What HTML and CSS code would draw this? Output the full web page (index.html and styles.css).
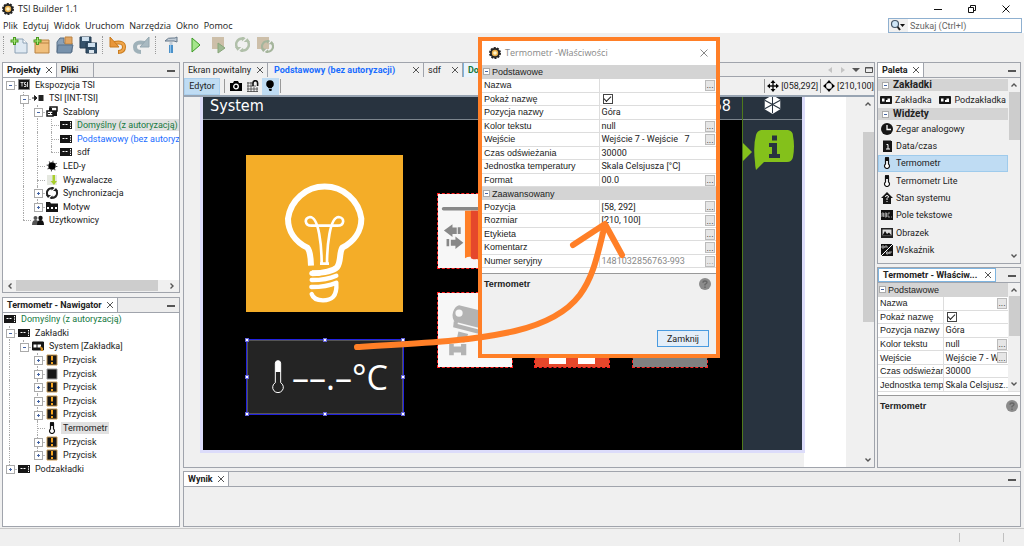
FILE: index.html
```html
<!DOCTYPE html>
<html lang="pl">
<head>
<meta charset="utf-8">
<title>TSI Builder 1.1</title>
<link rel="stylesheet" href="styles.css">
</head>
<body>
<svg class="defs" aria-hidden="true">
  <symbol id="gear" viewBox="0 0 12 12"><circle cx="6" cy="6" r="5" fill="#222" stroke="#222" stroke-width="2" stroke-dasharray="2 1.1"/><circle cx="6" cy="6" r="3.2" fill="#e9b04a"/><circle cx="6" cy="6" r="1.8" fill="#fff3c8"/></symbol>
  <symbol id="x" viewBox="0 0 8 8"><path d="M1 1l6 6m0-6l-6 6" stroke="currentColor" fill="none"/></symbol>
  <symbol id="up" viewBox="0 0 8 8"><path d="M1.5 5.5L4 3l2.500 2.500" stroke="#555" stroke-width="1.400" fill="none"/></symbol>
  <symbol id="down" viewBox="0 0 8 8"><path d="M1.500 2.500L4 5l2.500-2.500" stroke="#555" stroke-width="1.400" fill="none"/></symbol>
  <symbol id="left" viewBox="0 0 8 8"><path d="M5.500 1.500L3 4l2.500 2.500" stroke="#555" stroke-width="1.400" fill="none"/></symbol>
  <symbol id="right" viewBox="0 0 8 8"><path d="M2.500 1.500L5 4 2.500 6.500" stroke="#555" stroke-width="1.400" fill="none"/></symbol>
  <symbol id="panel" viewBox="0 0 12 12"><path d="M0 2h12v8H0z" fill="#161616"/><path d="M2.500 5.500h2M5.500 5.500h2" stroke="#fff"/><path d="M10.500 3v6" stroke="#fff" stroke-dasharray="1.400 1"/></symbol>
  <symbol id="tsi" viewBox="0 0 12 12"><path d="M.5.5h11v10H.5z" fill="#161616" stroke="#888"/><path d="M2.500 3.500h3M4 3.500v4M8 3.500H6.500v2H8v2H6M9.500 3v5" stroke="#fff" fill="none" stroke-width=".8"/></symbol>
  <symbol id="input" viewBox="0 0 12 12"><path d="M0 6h4M2.500 3.500L5 6 2.500 8.500z" stroke="#222" fill="#222"/><path d="M6.500 3h5v6h-5z" fill="#222"/></symbol>
  <symbol id="stack" viewBox="0 0 12 12"><path d="M4 1h7v4H4zM1 5h6v5H1z" fill="#fff" stroke="#161616" stroke-width="1.500"/><path d="M7 5h4v5H7zM3 2h3v3H3z" fill="#161616"/><path d="M2 7.500h8" stroke="#161616" stroke-dasharray="2 1"/></symbol>
  <symbol id="led" viewBox="0 0 12 12"><circle cx="6" cy="6" r="4.600" fill="none" stroke="#333" stroke-width="1.600" stroke-dasharray=".9 2.710"/><circle cx="6" cy="6" r="3.700" fill="#000"/></symbol>
  <symbol id="trigger" viewBox="0 0 12 12"><path d="M1 1h10v10H1z" fill="#e5e8e0"/><path d="M6.500 1h2.500v6h2L8 11 4.500 7h2z" fill="#a9cf2c"/></symbol>
  <symbol id="sync" viewBox="0 0 12 12"><path d="M6 1.200A4.800 4.800 0 0 0 2 9M6 10.800A4.800 4.800 0 0 0 10 3" fill="none" stroke="currentColor" stroke-width="2"/><path d="M5.500-1v4.500L8.500 1zM6.500 13V8.500L3.500 11zM0 8h5l-3 3zM12 4H7l3-3z" fill="currentColor"/></symbol>
  <symbol id="theme" viewBox="0 0 12 12"><path d="M0 1h4l1 1.500h7V11H0z" fill="#161616"/><path d="M1 6h2v2H1zM5 6h2v2H5zM9 6h2v2H9z" fill="#fff"/></symbol>
  <symbol id="users" viewBox="0 0 12 12"><circle cx="3.500" cy="4" r="2" fill="#555"/><path d="M0 11q0-5 3.500-5T7 11z" fill="#555"/><circle cx="8.500" cy="4" r="2.200" fill="#111"/><path d="M5 11q0-5 3.500-5t3.500 5z" fill="#111"/></symbol>
  <symbol id="page" viewBox="0 0 12 12"><path d="M.5 2.500h11v7H.5z" fill="#161616" stroke="#161616"/><path d="M2 4.500h2.500v3H2zM6 6h1.500V4.500H10V8H6z" fill="#fff"/></symbol>
  <symbol id="pageo" viewBox="0 0 12 12"><path d="M.5 2h11v8H.5z" fill="#161616" stroke="#161616"/><path d="M1.500 4.500h3v3h-3zM5.500 4.500H9v3H5.500z" fill="#fff"/><path d="M8 6l3 2v3H9z" fill="#d08b20"/></symbol>
  <symbol id="bang" viewBox="0 0 12 12"><path d="M1 1h10v10H1z" fill="#161616" stroke="#c79a55"/><path d="M6 2v4.500M6 8v2" stroke="#f7a41d" stroke-width="2"/></symbol>
  <symbol id="square" viewBox="0 0 12 12"><path d="M1 1h10v10H1z" fill="#161616" stroke="#999"/></symbol>
  <symbol id="thermo" viewBox="0 0 12 12"><path d="M4.500 7V1.500a1.500 1.500 0 0 1 3 0V7a2.500 2.500 0 1 1-3 0z" fill="#fff" stroke="#111" stroke-width="1.200"/><path d="M4.500 4V1.500a1.500 1.500 0 0 1 3 0V4z" fill="#111"/></symbol>
  <symbol id="clock" viewBox="0 0 12 12"><circle cx="6" cy="6" r="6" fill="#161616"/><path d="M6 2v4.500h4" stroke="#fff" fill="none" stroke-width="1.300"/></symbol>
  <symbol id="date" viewBox="0 0 12 12"><path d="M2 1h9v11H2z" fill="#161616"/><path d="M3 1V0m2 1V0m2 1V0m2 1V0" stroke="#161616"/><path d="M5.500 4.500h1.500v4.500M5 9h4" stroke="#fff" fill="none"/></symbol>
  <symbol id="house" viewBox="0 0 12 12"><path d="M6 0l6 6h-2v6H2V6H0z" fill="#161616"/><path d="M4.500 5Q4.500 3.500 6 3.500T7.500 5L6 6.500V8m0 1v1" stroke="#fff" fill="none"/></symbol>
  <symbol id="abc" viewBox="0 0 12 12"><path d="M0 1h12v10H0z" fill="#111"/><path d="M1 8V4h1.500v4M1 6h1.500M4 4v4h1.500V4zM4 6h1.500M9 4H7v4h2M10 8h1" stroke="#bbb" fill="none" stroke-width=".8"/></symbol>
  <symbol id="image" viewBox="0 0 12 12"><path d="M0 1h12v10H0z" fill="#222"/><path d="M1.500 2.500h9v6h-9z" fill="#ddd"/><path d="M1.500 8.500L4 4l2 3 2-1.500 2.500 3z" fill="#111"/></symbol>
  <symbol id="onoff" viewBox="0 0 12 12"><path d="M0 0h12v12H0z" fill="#111"/><path d="M0 12L12 0" stroke="#fff"/><path d="M1 2h2v2H1zM4 4V2h2v2M5.500 8h1.500v2H5.500zM8 10V8h3M8 9h2" stroke="#ccc" fill="none" stroke-width=".8"/></symbol>
  <symbol id="help" viewBox="0 0 12 12"><circle cx="6" cy="6" r="6" fill="#8b8b8b"/><path d="M4 4.800Q4 3 6 3t2 1.600Q8 5.500 6 6.500v1M6 8.500V10" stroke="#666" fill="none" stroke-width="1.300"/></symbol>
</svg>

<header class="top">
  <div class="titlebar">
    <svg class="i12"><use href="#gear"/></svg><span>TSI Builder 1.1</span>
    <div class="winbtns">
      <button aria-label="Minimalizuj"><svg viewBox="0 0 8 8"><path d="M0 4.500h8" stroke="#111"/></svg></button>
      <button aria-label="Przywróć"><svg viewBox="0 0 8 8"><path d="M.5 2.500h5v5h-5zM2.500 2V.5h5v5H6" stroke="#111" fill="none"/></svg></button>
      <button aria-label="Zakończ"><svg viewBox="0 0 8 8"><path d="M.5.5l7 7m0-7l-7 7" stroke="#111"/></svg></button>
    </div>
  </div>
  <div class="menubar">
    <nav class="menu"><button>Plik</button><button>Edytuj</button><button>Widok</button><button>Uruchom</button><button>Narzędzia</button><button>Okno</button><button>Pomoc</button></nav>
    <label class="search"><span class="lens"><svg viewBox="0 0 16 12"><path d="M7 7l3 4" stroke="#222" stroke-width="2"/><circle cx="5" cy="5" r="3.500" fill="#cfe6f7" stroke="#456" stroke-width="1.200"/><path d="M10 5h5l-2.500 3z" fill="#111"/></svg></span><input type="text" placeholder="Szukaj (Ctrl+I)" aria-label="Szukaj"></label>
  </div>
</header>

<div class="toolbar">
  <i class="grip"></i>
  <button aria-label="Nowy plik"><svg viewBox="0 0 18 18"><path d="M5 3h8l4 4v10H5z" fill="#dfe9f2" stroke="#8ba0b4"/><path d="M13 3v4h4" fill="#fff" stroke="#8ba0b4"/><path d="M4.500 1v8M.5 5h8" stroke="#4a9b1f" stroke-width="3"/><path d="M4.500 2v6M1.500 5h6" stroke="#a9e77c"/></svg></button>
  <button aria-label="Nowy projekt"><svg viewBox="0 0 18 18"><path d="M2 4h14v13H2z" fill="#f0bf7c" stroke="#b98242"/><path d="M2 7h14" stroke="#b98242"/><path d="M4.500 1v8M.5 5h8" stroke="#4a9b1f" stroke-width="3"/><path d="M4.500 2v6M1.500 5h6" stroke="#a9e77c"/></svg></button>
  <button aria-label="Otwórz projekt"><svg viewBox="0 0 18 18"><path d="M1 16V6l3-4h4v5h8v9z" fill="#8ba1b8" stroke="#587089"/><path d="M9 1h7v7H9z" fill="#e2a765" stroke="#b98242"/><path d="M2 9h15l-2 8H1z" fill="#7892ac" stroke="#587089"/></svg></button>
  <button aria-label="Zapisz wszystko"><svg viewBox="0 0 18 18"><path d="M1 1h11v11H1zM7 7h11v10H7z" fill="#35526b" stroke="#243b50"/><path d="M3 1h7v4H3zM9 7h7v4H9z" fill="#cfe0ee"/><path d="M10 14h5v3h-5z" fill="#dde6ee"/></svg></button>
  <i class="grip"></i>
  <button aria-label="Cofnij"><svg viewBox="0 0 18 18"><path d="M5 7q10-2 10 4 0 5-6 5" fill="none" stroke="#c87a1c" stroke-width="4"/><path d="M5 7q10-2 10 4 0 4-5 5" fill="none" stroke="#f0a54a" stroke-width="2"/><path d="M1 1v10h9z" fill="#e8963a" stroke="#c87a1c"/></svg></button>
  <button aria-label="Ponów"><svg viewBox="0 0 18 18"><path d="M13 7Q3 5 3 11q0 5 6 5" fill="none" stroke="#9fb1b9" stroke-width="4"/><path d="M17 1v10H8z" fill="#a9bac2" stroke="#94a7b0"/></svg></button>
  <i class="grip"></i>
  <button aria-label="Zbuduj"><svg viewBox="0 0 18 18"><path d="M3 5q3-4 8-3h2l2-1v5l-3-1H3z" fill="#c3ced8" stroke="#66788a"/><path d="M7.500 6h3v4h-3z" fill="#c3ced8"/><path d="M7 9h4v8H7z" fill="#4b91c9"/><path d="M8.500 9v8" stroke="#8fc3ec"/></svg></button>
  <button class="run" aria-label="Uruchom"><svg viewBox="0 0 18 18"><path d="M4 2v14l8-7z" fill="#a5e68c" stroke="#3c9b24"/></svg></button>
  <button disabled aria-label="Uruchom moduł"><svg viewBox="0 0 18 18"><path d="M1 1h12v12H1z" fill="#cdbfa9"/><path d="M7 7v10l7-5z" fill="#9fb992" stroke="#88a67b"/></svg></button>
  <button disabled aria-label="Odśwież"><svg viewBox="0 0 18 18" color="#b1c0aa"><use href="#sync" x="1" y="1" width="15" height="15"/></svg></button>
  <button disabled aria-label="Odśwież projekt"><svg viewBox="0 0 18 18" color="#a5b59c"><path d="M0 1h12v12H0z" fill="#cdbfa9"/><use href="#sync" x="4" y="4" width="13" height="13"/></svg></button>
</div>

<main class="work">
  <aside class="leftcol">
    <section class="pane">
      <div class="tabs"><button class="tab on b">Projekty <svg><use href="#x"/></svg></button><button class="tab b files">Pliki</button><span class="min"></span></div>
      <ul class="tree t11">
        <li><i class="c m r"></i><svg><use href="#tsi"/></svg><span>Ekspozycja TSI</span></li>
        <li><i></i><i class="c m d"></i><svg><use href="#input"/></svg><span>TSI [INT-TSI]</span></li>
        <li><i></i><i class="v"></i><i class="c m d"></i><svg><use href="#stack"/></svg><span>Szablony</span></li>
        <li><i></i><i class="v"></i><i class="v"></i><i class="v h"></i><svg><use href="#panel"/></svg><span class="green sel">Domyślny (z autoryzacją)</span></li>
        <li><i></i><i class="v"></i><i class="v"></i><i class="v h"></i><svg><use href="#panel"/></svg><span class="blue">Podstawowy (bez autoryzacji)</span></li>
        <li><i></i><i class="v"></i><i class="v"></i><i class="e h"></i><svg><use href="#panel"/></svg><span>sdf</span></li>
        <li><i></i><i class="v"></i><i class="v h"></i><svg><use href="#led"/></svg><span>LED-y</span></li>
        <li><i></i><i class="v"></i><i class="v h"></i><svg><use href="#trigger"/></svg><span>Wyzwalacze</span></li>
        <li><i></i><i class="v"></i><i class="c p v"></i><svg><use href="#sync"/></svg><span>Synchronizacja</span></li>
        <li><i></i><i class="v"></i><i class="c p e"></i><svg><use href="#theme"/></svg><span>Motyw</span></li>
        <li><i></i><i class="e h"></i><svg><use href="#users"/></svg><span>Użytkownicy</span></li>
      </ul>
      <div class="hscroll"><svg><use href="#left"/></svg><b></b><svg><use href="#right"/></svg></div>
    </section>
    <section class="pane">
      <div class="tabs"><button class="tab on b">Termometr - Nawigator <svg><use href="#x"/></svg></button><span class="min"></span></div>
      <ul class="tree t12">
        <li><svg><use href="#panel"/></svg><span class="green">Domyślny (z autoryzacją)</span></li>
        <li><i class="c m v"></i><svg><use href="#panel"/></svg><span>Zakładki</span></li>
        <li><i class="v"></i><i class="c m e"></i><svg><use href="#pageo"/></svg><span>System [Zakładka]</span></li>
        <li><i class="v"></i><i></i><i class="c p v"></i><svg><use href="#bang"/></svg><span>Przycisk</span></li>
        <li><i class="v"></i><i></i><i class="c p v"></i><svg><use href="#square"/></svg><span>Przycisk</span></li>
        <li><i class="v"></i><i></i><i class="c p v"></i><svg><use href="#bang"/></svg><span>Przycisk</span></li>
        <li><i class="v"></i><i></i><i class="c p v"></i><svg><use href="#bang"/></svg><span>Przycisk</span></li>
        <li><i class="v"></i><i></i><i class="c p v"></i><svg><use href="#bang"/></svg><span>Przycisk</span></li>
        <li><i class="v"></i><i></i><i class="v h"></i><svg><use href="#thermo"/></svg><span class="sel">Termometr</span></li>
        <li><i class="v"></i><i></i><i class="c p v"></i><svg><use href="#bang"/></svg><span>Przycisk</span></li>
        <li><i class="v"></i><i></i><i class="c p e"></i><svg><use href="#bang"/></svg><span>Przycisk</span></li>
        <li><i class="c p e"></i><svg><use href="#panel"/></svg><span>Podzakładki</span></li>
      </ul>
    </section>
  </aside>

  <div class="rest">
    <div class="upper">
      <section class="editor">
        <div class="tabs doc">
          <button class="tab welcome">Ekran powitalny <svg><use href="#x"/></svg></button><button class="tab b blue basic">Podstawowy (bez autoryzacji) <svg><use href="#x"/></svg></button><button class="tab sdf">sdf <svg><use href="#x"/></svg></button><button class="tab on b green">Domyślny (z autoryzacją) <svg><use href="#x"/></svg></button>
          <span class="docnav"><svg viewBox="0 0 8 8"><path d="M6 1v6L2 4z" fill="#c4c4c4"/></svg><svg viewBox="0 0 8 8"><path d="M2 1v6l4-3z" fill="#c4c4c4"/></svg><svg viewBox="0 0 8 8"><path d="M0 2h8L4 6z" fill="#555"/></svg><svg viewBox="0 0 8 8"><path d="M.5 1.500h7v5h-7zM0 2h8" stroke="#555" fill="none"/></svg></span>
        </div>
        <div class="edbar">
          <button class="edtab">Edytor</button><i class="sep"></i>
          <button aria-label="Zrzut ekranu"><svg viewBox="0 0 12 12"><path d="M0 3h3l1-2h4l1 2h3v8H0z"/><circle cx="6" cy="6.500" r="2.300" fill="none" stroke="#fff" stroke-width="1.300"/></svg></button>
          <button aria-label="Przyciąganie"><svg viewBox="0 0 12 12"><path d="M0 3h6M0 6h9M0 9h11M1 2v10M4 2v10M7 7v5M10 7v5M0 11.500h11" stroke="#444" stroke-width=".8"/><path d="M6 6V3a2.300 2.300 0 0 1 4.600 0v3" fill="none" stroke="#111" stroke-width="1.600"/></svg></button>
          <button class="lit" aria-label="Podświetlenie"><svg viewBox="0 0 12 12"><circle cx="6" cy="4" r="3.800"/><path d="M4 7h4l-.5 4h-2z"/><path d="M4 8.500h4" stroke="#bfdcf3" stroke-width=".7"/></svg></button>
          <i class="sep"></i>
          <span class="coords"><i class="sep"></i><svg viewBox="0 0 12 12"><path d="M6 1v10M1 6h10" stroke="#111" stroke-width="1.400"/><path d="M6 0l2.500 3h-5zM6 12l2.500-3h-5zM0 6l3-2.500v5zM12 6L9 3.500v5z"/></svg>[058,292]<i class="sep"></i><svg viewBox="0 0 12 12"><circle cx="6" cy="6" r="3.500" fill="none" stroke="#111"/><path d="M6 0l2.500 3h-5zM6 12l2.500-3h-5zM0 6l3-2.500v5zM12 6L9 3.500v5z"/></svg>[210,100]</span>
        </div>
        <div class="stage">
          <div class="sheet">
            <div class="device">
              <div class="screen">
                <div class="bar"><span>System</span><span>58</span></div>
                <svg class="w bulb" viewBox="48 46 471 471" fill="none" stroke="#fff" stroke-width="18"><path d="M243 378Q242 336 232 324C194 305 174 273 174 237A111 111 0 0 1 394 237C394 273 373 305 337 324C327 340 334 366 321 383Q304 399 246 401"/><path d="M246 401h20" stroke-width="16" stroke-linecap="round"/><path d="M275 374C275 320 267 232 240 232C222 234 223 258 245 258H322C344 258 345 234 326 232C299 232 291 320 291 374M270 372h27" stroke-width="8"/><path d="M245 421Q290 421 319 408" stroke-width="13" stroke-linecap="round"/><path d="M244 442Q290 442 319 429C322 472 304 482 279 482Q251 482 245 463" stroke-width="13" stroke-linecap="round" stroke-linejoin="round"/></svg>
                <div class="w temp">
                  <svg class="th" viewBox="120 112 42 102"><path d="M133 180V122a8 8 0 0 1 16 0V180a16 16 0 1 1-16 0z" fill="none" stroke="#fff" stroke-width="3"/><path d="M133 148V122a8 8 0 0 1 16 0V148z" fill="#fff"/></svg>
                  <span>––.–°C</span>
                  <i class="k nw"></i><i class="k n"></i><i class="k ne"></i><i class="k ww"></i><i class="k ee"></i><i class="k sw"></i><i class="k s"></i><i class="k se"></i>
                </div>
                <div class="w tile t1"><svg viewBox="620 160 225 225"><path d="M637 205H845" stroke="#888" stroke-width="11" stroke-linecap="round"/><path d="M702 211h130v142q-9-6-18 0-12 8-24 0l-30 0q-12 12-28 2-15-8-30 0z" fill="#ff7f27"/><path d="M720 211h30v142q-14 10-30 2z" fill="#e5472b"/><path d="M638 271l26-19v10h13v20h-13v9zM680 261h9v21h-9zM697 308l-24-19v10h-14v18h14v10zM646 297h8v22h-8z" fill="#888"/></svg></div>
                <div class="w tile t2"><svg viewBox="620 455 225 225"><path d="M684 492l120 30v60l-130-34q-14-18-8-36 6-18 18-20z" fill="#b3b3b3"/><circle cx="684" cy="516" r="11" fill="#f7f7f7"/><path d="M668 541l160 40v20l-162-42z" fill="#b3b3b3"/><path d="M680 547l140 36" stroke="#f7f7f7" stroke-width="5"/><path d="M682 572l30 8-12 26-24-6zM654 610h14v8h22v-8h16v34h-16v-8h-22v8h-14z" fill="#b3b3b3"/></svg></div>
                <div class="w tile t3"><b></b><b></b></div>
                <div class="w tile t4"></div>
              </div>
              <div class="side">
                <div class="bar"><svg viewBox="0 0 20 22"><path d="M10 0l9 5.500v11L10 22l-9-5.500v-11z" fill="#fff"/><path d="M10 1v20M1 6l18 10M19 6L1 16" stroke="#28333f" stroke-width="1.200"/></svg></div>
                <svg class="info" viewBox="0 0 60 50"><path d="M0 13l9 9-9 9z" fill="#84c11b"/><path d="M18 0Q31-1.500 45 0 50 1 50 6 52 16 50 27 49 32 44 32H21L13 40Q12 36 12 32 10 16 13 5 14 1 18 0z" fill="#84c11b"/><path d="M29 5.500h5v5h-5zM26 13h8v11h3v4H26v-4h3v-7h-3z" fill="#28333f"/></svg>
              </div>
            </div>
          </div>
          <div class="vscroll big"><svg><use href="#up"/></svg><b></b><svg><use href="#down"/></svg></div>
        </div>
      </section>

      <aside class="rightcol">
        <section class="pane">
          <div class="tabs"><button class="tab on b">Paleta <svg><use href="#x"/></svg></button><span class="min"></span></div>
          <div class="scrollbox">
            <div class="palette">
              <h3><i class="bx"></i>Zakładki</h3>
              <div class="two"><span><svg><use href="#page"/></svg>Zakładka</span><span><svg><use href="#page"/></svg>Podzakładka</span></div>
              <h3><i class="bx"></i>Widżety</h3>
              <ul>
                <li><svg><use href="#clock"/></svg>Zegar analogowy</li><li><svg><use href="#date"/></svg>Data/czas</li><li class="cur"><svg><use href="#thermo"/></svg>Termometr</li><li><svg><use href="#thermo"/></svg>Termometr Lite</li><li><svg><use href="#house"/></svg>Stan systemu</li><li><svg><use href="#abc"/></svg>Pole tekstowe</li><li><svg><use href="#image"/></svg>Obrazek</li><li><svg><use href="#onoff"/></svg>Wskaźnik</li><li><svg><use href="#panel"/></svg>Kamera</li>
              </ul>
            </div>
            <div class="vscroll"><svg><use href="#up"/></svg><b></b><svg><use href="#down"/></svg></div>
          </div>
        </section>
        <section class="pane props">
          <div class="tabs"><button class="tab on b focus">Termometr - Właściw... <svg><use href="#x"/></svg></button><span class="min"></span></div>
          <div class="scrollbox">
            <div class="clip"><table class="grid small">
              <tr><th colspan="2"><i class="bx"></i>Podstawowe</th></tr>
              <tr><td>Nazwa</td><td><button aria-label="Nazwa">...</button></td></tr>
              <tr><td><label for="s1">Pokaż nazwę</label></td><td><input type="checkbox" id="s1" checked></td></tr>
              <tr><td>Pozycja nazwy</td><td>Góra</td></tr>
              <tr><td>Kolor tekstu</td><td>null<button aria-label="Kolor tekstu">...</button></td></tr>
              <tr><td>Wejście</td><td>Wejście 7 - W<button aria-label="Wejście">...</button></td></tr>
              <tr><td>Czas odświeżani</td><td>30000</td></tr>
              <tr><td>Jednostka temper</td><td>Skala Celsjusz...</td></tr>
            </table></div>
            <div class="vscroll p"><svg><use href="#up"/></svg><b></b><svg><use href="#down"/></svg></div>
          </div>
          <div class="desc"><b>Termometr</b><svg class="i12"><use href="#help"/></svg></div>
        </section>
      </aside>
    </div>
    <section class="pane output">
      <div class="tabs"><button class="tab on b">Wynik <svg><use href="#x"/></svg></button><span class="min"></span></div>
    </section>
  </div>
</main>
<footer class="status"><i></i><i></i></footer>

<div class="dialog" role="dialog" aria-label="Termometr - Właściwości">
  <div class="dtitle"><svg class="i12"><use href="#gear"/></svg><span>Termometr -Właściwości</span><button aria-label="Zamknij okno"><svg viewBox="0 0 8 8"><path d="M.5.5l7 7m0-7l-7 7" stroke="#888"/></svg></button></div>
  <table class="grid full">
    <tr><th colspan="2"><i class="bx"></i>Podstawowe</th></tr>
    <tr><td>Nazwa</td><td><button aria-label="Nazwa">...</button></td></tr>
    <tr><td><label for="d1">Pokaż nazwę</label></td><td><input type="checkbox" id="d1" checked></td></tr>
    <tr><td>Pozycja nazwy</td><td>Góra</td></tr>
    <tr><td>Kolor tekstu</td><td>null<button aria-label="Kolor tekstu">...</button></td></tr>
    <tr><td>Wejście</td><td>Wejście 7 - Wejście &nbsp; 7<button aria-label="Wejście">...</button></td></tr>
    <tr><td>Czas odświeżania</td><td>30000</td></tr>
    <tr><td>Jednostka temperatury</td><td>Skala Celsjusza [°C]</td></tr>
    <tr><td>Format</td><td>00.0<button aria-label="Format">...</button></td></tr>
    <tr><th colspan="2"><i class="bx"></i>Zaawansowany</th></tr>
    <tr><td>Pozycja</td><td>[58, 292]<button aria-label="Pozycja">...</button></td></tr>
    <tr><td>Rozmiar</td><td>[210, 100]<button aria-label="Rozmiar">...</button></td></tr>
    <tr><td>Etykieta</td><td><button aria-label="Etykieta">...</button></td></tr>
    <tr><td>Komentarz</td><td><button aria-label="Komentarz">...</button></td></tr>
    <tr><td>Numer seryjny</td><td class="dim">1481032856763-993<button aria-label="Numer seryjny">...</button></td></tr>
  </table>
  <div class="desc"><b>Termometr</b><svg class="i12"><use href="#help"/></svg></div>
  <button class="ok">Zamknij</button>
</div>
<svg class="arrow" viewBox="340 210 300 150" aria-hidden="true"><path d="M357 347C430 343 470 341 515 331C590 313 592 275 605 225M573 245L605 224L622 255" fill="none" stroke="#ff7f27" stroke-width="6" stroke-linecap="round" stroke-linejoin="round"/></svg>
</body>
</html>
```
FILE: styles.css
```css
* { box-sizing: border-box; }
body { margin: 0; height: 100vh; display: flex; flex-direction: column; position: relative; overflow: hidden; background: #f0f0f0; color: #222; font: 9px/12px Roboto, sans-serif; }
button { font: inherit; color: inherit; background: none; border: 0; padding: 0; margin: 0; }
ul { list-style: none; margin: 0; padding: 0; }
svg { display: block; flex: none; }
.defs { position: absolute; width: 0; height: 0; }
.i12 { width: 12px; height: 12px; }
.b { font-weight: 700; }
.green { color: #16793f; }
.blue { color: #1a6dff; }

.top { background: #fff; font-family: "Open Sans", sans-serif; }
.titlebar { display: flex; align-items: center; gap: 4px; height: 17px; padding: 0 14px 0 2px; }
.winbtns { margin-left: auto; display: flex; gap: 26px; }
.winbtns svg { width: 8px; height: 8px; }
.menubar { display: flex; justify-content: space-between; height: 16px; padding: 0 2px 0 3px; }
.menu { display: flex; gap: 5px; align-items: center; padding-top: 2px; }
.search { display: flex; width: 134px; height: 15px; margin-top: 1px; border: 1px solid #8fb0d0; background: #fff; }
.lens { width: 19px; background: #f0f0f0; padding: 0 1px; }
.lens svg { width: 16px; height: 12px; }
.search input { flex: 1; min-width: 0; border: 0; padding: 0 2px; font: 9px/12px Roboto, sans-serif; outline: 0; }
.search input::placeholder { color: #666; }

.toolbar { display: flex; align-items: center; gap: 5px; height: 24px; padding-left: 3px; margin-bottom: 5px; }
.toolbar button { margin-right: 0; }
.toolbar svg { width: 18px; height: 18px; }
.toolbar .run { margin-left: 3px; }
.grip { width: 2px; height: 18px; border-left: 1px dotted #999; }

.work { flex: 1; min-height: 0; display: flex; gap: 3px; padding: 0 3px 0 2px; }
.leftcol { width: 178px; display: flex; flex-direction: column; gap: 4px; }
.rest { flex: 1; min-width: 0; display: flex; flex-direction: column; gap: 3px; }
.upper { flex: 1; min-height: 0; display: flex; gap: 2px; }
.editor { flex: 1; min-width: 0; display: flex; flex-direction: column; border: 1px solid #a0a4ac; border-top: 0; }
.rightcol { width: 144px; display: flex; flex-direction: column; gap: 3px; }
.pane { flex: 1 1 0; min-height: 0; display: flex; flex-direction: column; border: 1px solid #a0a4ac; background: #fff; overflow: hidden; }
.output { flex: 0 0 56px; background: #f0f0f0; }

.tabs { display: flex; flex: none; height: 15px; background: #ededed; border-bottom: 1px solid #a0a4ac; }
.tab { display: flex; align-items: center; justify-content: space-between; gap: 4px; padding: 0 3px 0 4px; border-right: 1px solid #a0a4ac; white-space: nowrap; }
.tab svg { width: 8px; height: 8px; color: #555; }
.tab.on { background: #fff; }
.tab.focus { width: 118px; border: 1px solid #7db4e0; }
.files { width: 37px; }
.min { width: 8px; height: 2px; margin: 7px 4px 0 auto; background: #555; }
.doc { border-top: 1px solid #a0a4ac; }
.doc .tab { height: 14px; background: #f0f0f0; }
.doc .tab.on { background: #eaf4fc; border-left: 1px solid #7db4e0; }
.welcome { width: 84px; }
.basic { width: 156px; }
.doc .basic { padding-left: 6px; }
.sdf { width: 39px; }
.docnav { display: flex; gap: 5px; align-items: center; margin-left: auto; padding-right: 1px; }
.docnav svg { width: 8px; height: 8px; }

.tree { display: grid; flex: none; }
.t11 { height: 149px; grid-template-rows: repeat(11, minmax(0, 1fr)); }
.t12 { height: 163px; grid-template-rows: repeat(12, minmax(0, 1fr)); }
.tree li { display: flex; align-items: center; min-height: 0; white-space: nowrap; overflow: hidden; }
.tree li > i { position: relative; flex: none; width: 14px; height: 100%; }
.tree li svg { width: 12px; height: 12px; margin: 0 3px 0 1px; }
.tree li span { padding: 0 2px; }
.tree .sel { background: #e1e1e1; }
.v::before, .e::before, .d::before { content: ""; position: absolute; left: 6px; top: 0; height: 100%; border-left: 1px dotted #aaa; }
.e::before { height: 50%; }
.h::after { content: ""; position: absolute; left: 6px; top: 50%; width: 8px; border-top: 1px dotted #aaa; }
.c { background: linear-gradient(#bbb, #bbb) right 7px / 4px 1px no-repeat; }
.c::after, .bx { background: linear-gradient(#4565a5, #4565a5) center / 3px 1px no-repeat #fff; border: 1px solid #aaa; width: 7px; height: 7px; }
.c::after { content: ""; position: absolute; left: 3px; top: 3px; }
.p::after { background: linear-gradient(#4565a5, #4565a5) center / 3px 1px no-repeat, linear-gradient(#4565a5, #4565a5) center / 1px 3px no-repeat, #fff; }
.hscroll { display: flex; align-items: center; height: 12px; margin-top: auto; padding: 0 3px; background: #f0f0f0; }
.hscroll svg { width: 8px; height: 8px; }
.hscroll b { flex: 0 1 142px; height: 11px; margin: 0 auto 0 2px; background: #cdcdcd; }

.edbar { display: flex; align-items: center; flex: none; height: 20px; border-bottom: 2px solid #98a4b2; }
.edtab { width: 36px; height: 17px; background: #bfdcf3; border: 1px solid #abd0ee; }
.edbar button svg, .coords svg { width: 12px; height: 12px; }
.edbar button:not(.edtab) { width: 17px; height: 17px; padding: 0 2px; }
.edbar .lit { background: #bfdcf3; }
.sep { width: 1px; height: 14px; margin: 0 3px 0 4px; background: #999; }
.edbar > .sep:last-of-type { margin-left: 1px; }
.coords { display: flex; align-items: center; gap: 2px; margin-left: auto; }
.coords .sep { margin: 0; }

.stage { flex: 1; min-height: 0; display: flex; background: #f0f0f0; }
.sheet { flex: 1; min-width: 0; margin-right: 16px; padding-left: 16px; overflow: hidden; background: linear-gradient(90deg, #f0f0f0 620px, #fff 620px); }
.device { display: flex; width: 605px; height: 356px; border: 3px solid #dcdcfa; border-top: 0; background: #000; }
.screen { position: relative; flex: 1; }
.side { width: 60px; background: #28333f; border-left: 1px solid #4f7a1c; }
.bar { display: flex; justify-content: space-between; height: 23px; padding: 0 11px 0 7px; background: #28333f; border-bottom: 1px solid #7c858d; color: #fff; font: 16px/17px "DejaVu Sans Condensed", "DejaVu Sans", sans-serif; }
.side .bar { justify-content: center; padding: 0; }
.side .bar svg { width: 19px; height: 19px; margin-top: -2px; }
.info { width: 60px; height: 50px; margin-top: 10px; }
.w { position: absolute; }
.bulb { left: 43px; top: 58px; width: 157px; height: 157px; background: #f4ad28; }
.temp { left: 43px; top: 242px; width: 158px; height: 76px; display: flex; align-items: center; gap: 7px; padding: 0 0 1px 24px; background: #242424; border: 1px solid #2222e0; outline: 1px solid #555; outline-offset: -2px; color: #fff; font: 34px/40px "Open Sans", sans-serif; }
.th { width: 14px; height: 34px; }
.k { position: absolute; width: 2px; height: 2px; background: #fff; outline: 1px solid #66d; margin: -1px; }
.nw, .ww, .sw { left: 0; } .n, .s { left: 50%; } .ne, .ee, .se { left: 100%; }
.nw, .n, .ne { top: 0; } .ww, .ee { top: 50%; } .sw, .s, .se { top: 100%; }
.tile { width: 76px; height: 76px; background: #f7f7f7; border: 1px dashed #f22; background-clip: padding-box; }
.tile svg { width: 74px; height: 74px; }
.t1 { left: 234px; top: 96px; }
.t2 { left: 234px; top: 195px; }
.t3 { left: 331px; top: 195px; background-color: #e5472b; display: flex; align-items: flex-end; justify-content: center; gap: 12px; padding-bottom: 3px; }
.t3 b { width: 17px; height: 20px; background: #fff; }
.t4 { left: 429px; top: 195px; background-color: #808080; }

.vscroll { display: flex; flex-direction: column; align-items: center; flex: none; width: 12px; padding: 3px 0; background: #f0f0f0; }
.vscroll svg { width: 8px; height: 8px; }
.vscroll b { width: 11px; height: 48px; margin: 3px 0 auto; background: #cdcdcd; }
.vscroll.big b { height: 190px; margin-top: 24px; }
.vscroll.p b { height: 40px; margin-top: 2px; }

.scrollbox { flex: 1; min-height: 0; display: flex; background: #f0f0f0; overflow: hidden; }
.palette { flex: 1; min-width: 0; padding-top: 1px; }
.palette h3 { display: flex; align-items: center; gap: 4px; height: 12px; margin: 0; padding-left: 4px; background: #d4d4d4; font: 700 10px/12px Roboto, sans-serif; }
.bx { display: inline-block; flex: none; }
.two { display: flex; justify-content: space-between; height: 17px; padding: 0 2px; }
.two span, .palette li { display: flex; align-items: center; gap: 3px; }
.palette svg { width: 12px; height: 12px; }
.palette ul { display: grid; height: 156px; grid-template-rows: repeat(9, minmax(0, 1fr)); }
.palette li { padding-left: 2px; border: 1px solid transparent; }
.palette .cur { background: #bfdcf3; border-color: #9fcbec; }

.clip { flex: 1; min-width: 0; overflow: hidden; }
.grid { width: 100%; table-layout: fixed; border-collapse: collapse; background: #fff; }
.full { height: 203px; }
.small { height: 109px; }
.grid th { height: 13px; padding: 0 1px; background: #d4d4d4; text-align: left; font: 9px/12px "Liberation Sans", sans-serif; }
.grid .bx { margin: 0 2px 0 0; }
.grid td { position: relative; height: 13px; padding: 0 0 0 2px; border-bottom: 1px solid #ddd; line-height: 12px; white-space: nowrap; overflow: hidden; }
.grid td:first-child { font-family: "Liberation Sans", sans-serif; border-right: 1px solid #ddd; }
.grid td button { position: absolute; right: 1px; top: 1px; width: 10px; height: 11px; border: 1px solid #bbb; background: #e6e6e6; line-height: 6px; }
.grid .dim { color: #888; }
.grid input { display: grid; place-items: center; appearance: none; width: 10px; height: 10px; margin: 0 1px; border: 1px solid #444; background: #fff; }
.grid input:checked::before { content: ""; width: 6px; height: 3px; margin-bottom: 2px; border: solid #222; border-width: 0 0 1px 1px; transform: rotate(-45deg); }
.props { flex: 0 0 201px; }
.props .scrollbox { flex: 0 0 109px; border-bottom: 1px solid #ddd; }
.desc { display: flex; justify-content: space-between; padding: 4px 2px; background: #f0f0f0; border-top: 1px solid #999; font: 9px/12px "Liberation Sans", sans-serif; }
.props .desc { flex: 1; margin-top: 3px; }

.status { display: flex; justify-content: flex-end; gap: 43px; flex: none; height: 18px; margin-top: 1px; padding: 4px 20px; border-top: 1px solid #c8c8c8; }
.status i { border-left: 1px solid #c0c0c0; }

.dialog { position: absolute; left: 478px; top: 37px; width: 242px; height: 321px; display: flex; flex-direction: column; border: 4px solid #ff7f27; background: #fff; }
.dtitle { display: flex; align-items: center; gap: 4px; height: 24px; padding: 0 8px 0 7px; font: 9px/12px "Open Sans", sans-serif; color: #888; }
.dtitle button { margin-left: auto; }
.dtitle button svg { width: 8px; height: 8px; }
.dialog .desc { flex: 1; margin-top: 5px; padding: 4px 5px 0 2px; }
.ok { position: absolute; right: 7px; bottom: 7px; width: 52px; height: 17px; border: 1px solid #4a9be0; background: #e3eef9; }
.arrow { position: absolute; left: 340px; top: 210px; width: 300px; height: 150px; pointer-events: none; }
```
